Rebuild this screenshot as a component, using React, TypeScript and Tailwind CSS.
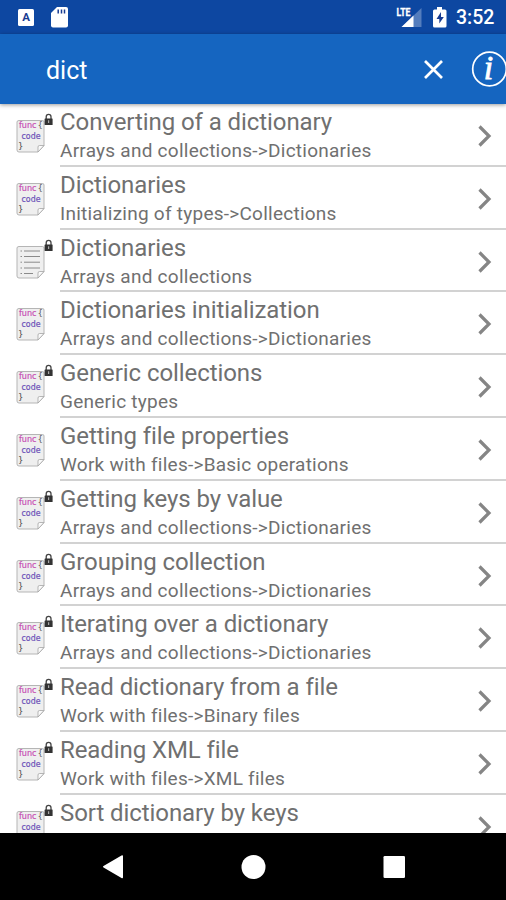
type Item = { title: string; path: string; locked: boolean; kind: "code" | "text" };

const items: Item[] = [
  { title: "Converting of a dictionary", path: "Arrays and collections->Dictionaries", locked: true, kind: "code" },
  { title: "Dictionaries", path: "Initializing of types->Collections", locked: false, kind: "code" },
  { title: "Dictionaries", path: "Arrays and collections", locked: true, kind: "text" },
  { title: "Dictionaries initialization", path: "Arrays and collections->Dictionaries", locked: false, kind: "code" },
  { title: "Generic collections", path: "Generic types", locked: true, kind: "code" },
  { title: "Getting file properties", path: "Work with files->Basic operations", locked: false, kind: "code" },
  { title: "Getting keys by value", path: "Arrays and collections->Dictionaries", locked: true, kind: "code" },
  { title: "Grouping collection", path: "Arrays and collections->Dictionaries", locked: true, kind: "code" },
  { title: "Iterating over a dictionary", path: "Arrays and collections->Dictionaries", locked: true, kind: "code" },
  { title: "Read dictionary from a file", path: "Work with files->Binary files", locked: true, kind: "code" },
  { title: "Reading XML file", path: "Work with files->XML files", locked: true, kind: "code" },
  { title: "Sort dictionary by keys", path: "", locked: true, kind: "code" },
];

function PageIcon({ kind, locked }: { kind: Item["kind"]; locked: boolean }) {
  return (
    <svg className="block h-[52px] w-[44px] shrink-0" viewBox="0 0 44 52">
      <path d="M3 16.500h23.500q1.500 0 1.500 1.500v23.500l-6 6.500H3q-2 0-2-2v-28q0-1.500 2-1.500z" fill="#efefef" stroke="#b5b5b5" />
      <path d="M28 41.500h-4.500q-1.500 0-1.500 1.500v5z" fill="#fafafa" stroke="#a5a5a5" strokeWidth=".8" />
      {kind === "code" ? (
        <g fontFamily="'DejaVu Sans', sans-serif" fontSize="8.500">
          <text x="3" y="24" fill="#c850b4" stroke="#c850b4" strokeWidth=".2" textLength="17.500" lengthAdjust="spacingAndGlyphs">func</text>
          <text x="21.500" y="24" fill="#555">{"{"}</text>
          <text x="5.500" y="34.500" fill="#6c52b8" stroke="#6c52b8" strokeWidth=".2" textLength="19" lengthAdjust="spacingAndGlyphs">code</text>
          <text x="2" y="45" fill="#444">{"}"}</text>
        </g>
      ) : (
        <g stroke="#8a8a8a" strokeWidth="1">
          <path d="M8 21h16M8 26.500h16M8 32.200h16M8 38h16M8 43.500h9" />
          <path d="M4.500 21h1.500M4.500 26.500h1.500M4.500 32.200h1.500M4.500 38h1.500M4.500 43.500h1.500" />
        </g>
      )}
      {locked && (
        <g>
          <path d="M30.200 15v-2.300a2.400 2.400 0 0 1 4.800 0v2.300" fill="none" stroke="#444" strokeWidth="1.300" />
          <rect x="28.600" y="14.500" width="8" height="6.500" rx=".5" fill="#333" />
          <path d="M32.600 16.300v2.600" stroke="#aaa" strokeWidth="1.200" />
        </g>
      )}
    </svg>
  );
}

function Row({ item }: { item: Item }) {
  return (
    <li className="flex h-[62.8px] shrink-0 pl-4">
      <PageIcon kind={item.kind} locked={item.locked} />
      <div className="flex min-w-0 flex-1 border-b-2 border-[#d2d2d2]">
        <div className="flex-1 whitespace-nowrap pt-[4px] text-[#707070]">
          <div className="text-[24px] leading-[29px] tracking-[-0.08px]">{item.title}</div>
          <div className="text-[19px] leading-[28px] tracking-[0.25px]">{item.path}</div>
        </div>
        <svg className="mt-[20px] mr-[13px] h-6 w-4" viewBox="0 0 16 24" fill="none" stroke="#858585" strokeWidth="3.200">
          <path d="M2.500 2.500 12 12l-9.500 9.500" />
        </svg>
      </div>
    </li>
  );
}

export default function App() {
  return (
    <div className="flex h-[900px] w-[506px] flex-col overflow-hidden bg-white font-['Roboto',sans-serif]">
      <div className="flex h-[34px] shrink-0 items-center bg-[#0d47a1] text-white">
        <svg className="h-[34px] w-[80px]" viewBox="0 0 80 34">
          <rect x="18" y="9" width="16" height="17" rx="1.500" fill="#fff" />
          <text x="26" y="21" textAnchor="middle" fontFamily="Roboto, sans-serif" fontWeight="700" fontSize="11.500" fill="#173b91">A</text>
          <path d="M57 7h9q2 0 2 2v16.500q0 2-2 2H53q-2 0-2-2V13z" fill="#fff" />
          <path d="M58.200 9.500v4M61.500 9.500v4M64.500 9.500v4" stroke="#173b91" strokeWidth="1.500" />
        </svg>
        <svg className="ml-auto h-[34px] w-[56px]" viewBox="394 0 56 34">
          <path d="M421.500 8v19h-20z" fill="#547dbd" />
          <path d="M413.500 15.600V27h-12z" fill="#fff" />
          <rect x="396" y="7" width="15" height="9.500" fill="#0d47a1" />
          <text x="396.500" y="16" fontFamily="Roboto, sans-serif" fontWeight="700" fontSize="11.500" fill="#fff" stroke="#fff" strokeWidth=".3" textLength="14" lengthAdjust="spacingAndGlyphs">LTE</text>
          <path d="M437 7h5v2.500h3q1.500 0 1.500 1.500v15q0 1.500-1.500 1.500h-10.500q-1.500 0-1.500-1.500V11q0-1.500 1.500-1.500h2.500z" fill="#fff" />
          <path d="m441 12-4.500 7h2.800v4.500l4.500-6.500h-2.800z" fill="#173b91" />
        </svg>
        <div className="w-[56px] pl-[6px] pt-[2px] text-[19.500px] font-medium leading-[32px]">3:52</div>
      </div>
      <header className="relative z-10 flex h-[70px] shrink-0 items-center bg-[#1565c0] pl-[46px] text-white shadow-[0_1px_4px_rgba(0,0,0,0.4)]">
        <div className="flex-1 pt-[4px] text-[25px] leading-[30px]">dict</div>
        <svg className="h-[70px] w-[90px]" viewBox="416 34 90 70" fill="none" stroke="#fff">
          <path d="m425 61 17 17m0-17-17 17" strokeWidth="2.700" />
          <circle cx="489.500" cy="69" r="16.800" strokeWidth="1.700" />
          <text x="488.500" y="79" textAnchor="middle" fill="#fff" strokeWidth=".8" fontFamily="'Liberation Serif', serif" fontStyle="italic" fontSize="34">i</text>
        </svg>
      </header>
      <ul className="flex min-h-0 flex-1 flex-col overflow-hidden">
        {items.map((item) => (
          <Row key={item.title + item.path} item={item} />
        ))}
      </ul>
      <nav className="flex h-[67px] shrink-0 bg-black">
        <svg className="h-[67px] w-full" viewBox="0 833 506 67" fill="#fff">
          <path d="m103.500 866 18-10.500q1.500-.8 1.500.8v21q0 1.500-1.500.8l-18-10.700q-1.200-.7 0-1.400z" />
          <circle cx="253.500" cy="867" r="12" />
          <rect x="383.500" y="856" width="21.500" height="22" rx="1.300" />
        </svg>
      </nav>
    </div>
  );
}
